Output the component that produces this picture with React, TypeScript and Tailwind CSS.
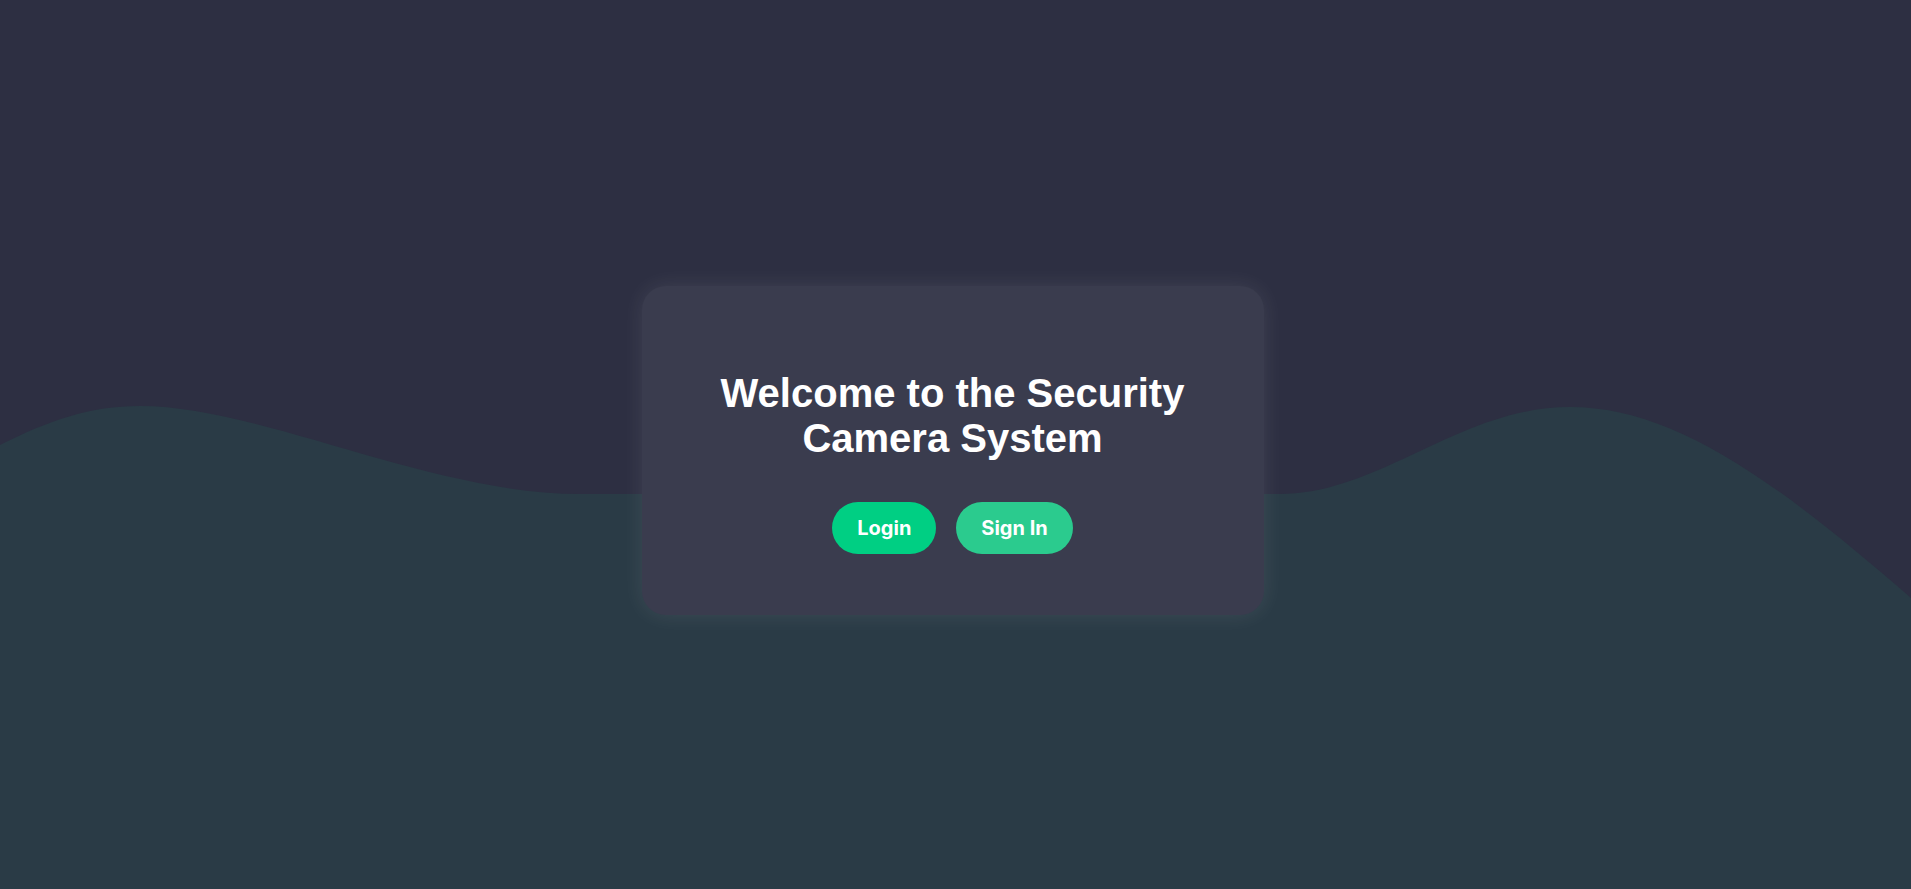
export default function App() {
  return (
    <div className="relative flex min-h-screen w-full items-center justify-center overflow-hidden bg-[#2d2f42] pt-[11px] pr-[6px]">
      {/* background wave */}
      <svg
        className="absolute inset-0 h-full w-full"
        viewBox="0 0 1911 889"
        preserveAspectRatio="none"
      >
        <path
          fill="#2a3b46"
          d="M0,445 C50,420 90,406 140,406 C260,406 430,494 580,494 L1280,494 C1380,494 1460,407 1570,407 C1670,407 1770,475 1911,598 L1911,889 L0,889 Z"
        />
      </svg>

      <div className="relative z-10 w-[622px] rounded-3xl bg-[#3a3c4e] px-[60px] pb-[61px] pt-[85px] text-center shadow-[0_0_22px_rgba(255,255,255,0.09)]">
        <h1 className="font-['Liberation_Sans',Arial,sans-serif] text-[40px] font-bold leading-[45px] text-white">
          Welcome to the Security Camera System
        </h1>
        <div className="mt-[41px] flex items-center justify-center gap-5 font-['Inter',sans-serif]">
          <button className="rounded-full bg-[#00cf83] px-[25px] py-3 text-xl font-bold leading-7 text-white">
            Login
          </button>
          <button className="rounded-full bg-[#2bcb8e] px-[25px] py-3 text-xl font-bold leading-7 text-white">
            Sign In
          </button>
        </div>
      </div>
    </div>
  );
}
